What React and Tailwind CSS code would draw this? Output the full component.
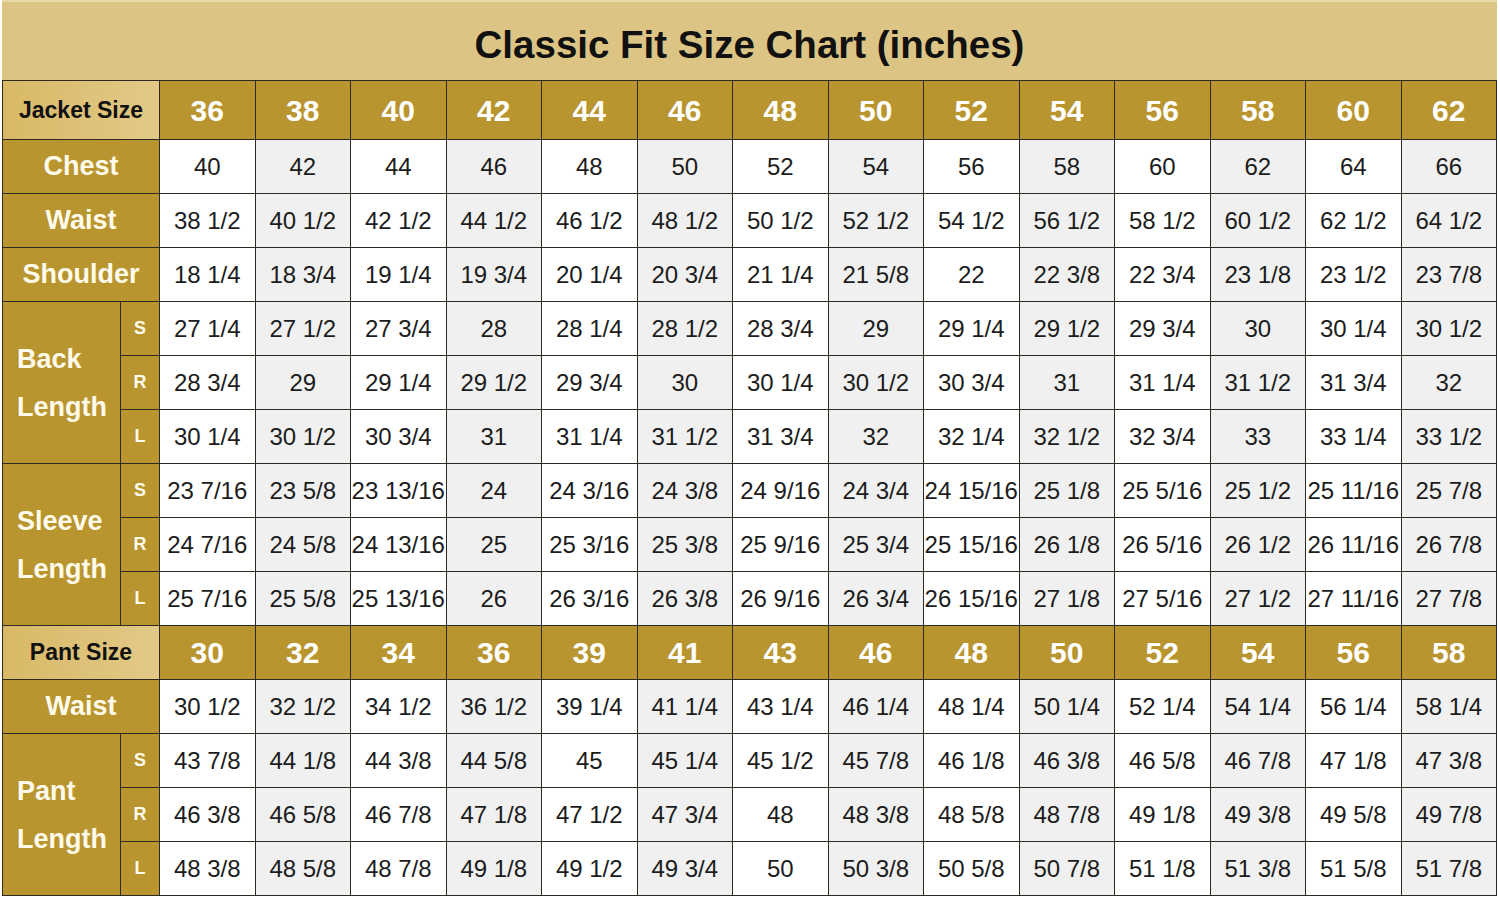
import React from 'react';

// Classic fit size chart (jacket + pant)
const jacketSizes = ['36', '38', '40', '42', '44', '46', '48', '50', '52', '54', '56', '58', '60', '62'];
const pantSizes = ['30', '32', '34', '36', '39', '41', '43', '46', '48', '50', '52', '54', '56', '58'];

const chest = ['40', '42', '44', '46', '48', '50', '52', '54', '56', '58', '60', '62', '64', '66'];
const jacketWaist = ['38 1/2', '40 1/2', '42 1/2', '44 1/2', '46 1/2', '48 1/2', '50 1/2', '52 1/2', '54 1/2', '56 1/2', '58 1/2', '60 1/2', '62 1/2', '64 1/2'];
const shoulder = ['18 1/4', '18 3/4', '19 1/4', '19 3/4', '20 1/4', '20 3/4', '21 1/4', '21 5/8', '22', '22 3/8', '22 3/4', '23 1/8', '23 1/2', '23 7/8'];

const backLength = [
  ['S', ['27 1/4', '27 1/2', '27 3/4', '28', '28 1/4', '28 1/2', '28 3/4', '29', '29 1/4', '29 1/2', '29 3/4', '30', '30 1/4', '30 1/2']],
  ['R', ['28 3/4', '29', '29 1/4', '29 1/2', '29 3/4', '30', '30 1/4', '30 1/2', '30 3/4', '31', '31 1/4', '31 1/2', '31 3/4', '32']],
  ['L', ['30 1/4', '30 1/2', '30 3/4', '31', '31 1/4', '31 1/2', '31 3/4', '32', '32 1/4', '32 1/2', '32 3/4', '33', '33 1/4', '33 1/2']],
];

const sleeveLength = [
  ['S', ['23 7/16', '23 5/8', '23 13/16', '24', '24 3/16', '24 3/8', '24 9/16', '24 3/4', '24 15/16', '25 1/8', '25 5/16', '25 1/2', '25 11/16', '25 7/8']],
  ['R', ['24 7/16', '24 5/8', '24 13/16', '25', '25 3/16', '25 3/8', '25 9/16', '25 3/4', '25 15/16', '26 1/8', '26 5/16', '26 1/2', '26 11/16', '26 7/8']],
  ['L', ['25 7/16', '25 5/8', '25 13/16', '26', '26 3/16', '26 3/8', '26 9/16', '26 3/4', '26 15/16', '27 1/8', '27 5/16', '27 1/2', '27 11/16', '27 7/8']],
];

const pantWaist = ['30 1/2', '32 1/2', '34 1/2', '36 1/2', '39 1/4', '41 1/4', '43 1/4', '46 1/4', '48 1/4', '50 1/4', '52 1/4', '54 1/4', '56 1/4', '58 1/4'];

const pantLength = [
  ['S', ['43 7/8', '44 1/8', '44 3/8', '44 5/8', '45', '45 1/4', '45 1/2', '45 7/8', '46 1/8', '46 3/8', '46 5/8', '46 7/8', '47 1/8', '47 3/8']],
  ['R', ['46 3/8', '46 5/8', '46 7/8', '47 1/8', '47 1/2', '47 3/4', '48', '48 3/8', '48 5/8', '48 7/8', '49 1/8', '49 3/8', '49 5/8', '49 7/8']],
  ['L', ['48 3/8', '48 5/8', '48 7/8', '49 1/8', '49 1/2', '49 3/4', '50', '50 3/8', '50 5/8', '50 7/8', '51 1/8', '51 3/8', '51 5/8', '51 7/8']],
];

const DataCells = ({ values }) =>
  values.map((v, i) => (
    <div
      key={i}
      className={`flex items-center justify-center whitespace-nowrap text-[24px] text-[#1c1c1c] ${i % 2 ? 'bg-[#f0f0f0]' : 'bg-white'}`}
    >
      {v}
    </div>
  ));

const HeaderRow = ({ label, sizes }) => (
  <>
    <div className="col-span-2 flex items-center justify-center bg-gradient-to-r from-[#d9b966] to-[#e2c988] text-[23px] font-bold text-[#111]">
      {label}
    </div>
    {sizes.map((s) => (
      <div key={s} className="flex items-center justify-center bg-[#b99530] text-[30px] font-bold text-white">
        {s}
      </div>
    ))}
  </>
);

const LabelRow = ({ label, values }) => (
  <>
    <div className="col-span-2 flex items-center justify-center bg-[#b99530] text-[27px] font-bold text-[#fffbea]">
      {label}
    </div>
    <DataCells values={values} />
  </>
);

const GroupRows = ({ lines, rows }) => (
  <>
    {rows.map(([fit, values], idx) => (
      <React.Fragment key={fit}>
        {idx === 0 && (
          <div className="row-span-3 flex flex-col justify-center bg-[#b99530] pl-[14px] text-[27px] font-bold leading-[48px] text-[#fffbea]">
            {lines.map((l) => (
              <span key={l}>{l}</span>
            ))}
          </div>
        )}
        <div className="col-start-2 flex items-center justify-center bg-[#b99530] text-[18px] font-bold text-[#fffbea]">
          {fit}
        </div>
        <DataCells values={values} />
      </React.Fragment>
    ))}
  </>
);

const App = () => {
  return (
    <div className="h-[898px] w-[1500px] bg-white pl-[2px] font-['Liberation_Sans',Arial,sans-serif]">
      <div className="flex h-[80px] w-[1495px] items-center justify-center border-t-2 border-[#e9d9a8] bg-[#dcc584] pt-[8px]">
        <h1 className="text-[38.5px] font-bold text-[#111]">Classic Fit Size Chart (inches)</h1>
      </div>

      <div className="grid w-[1495px] grid-cols-[117px_38px_repeat(14,minmax(0,1fr))] grid-rows-[58px_repeat(14,53px)] gap-px bg-[#2e2a22] p-px">
        <HeaderRow label="Jacket Size" sizes={jacketSizes} />
        <LabelRow label="Chest" values={chest} />
        <LabelRow label="Waist" values={jacketWaist} />
        <LabelRow label="Shoulder" values={shoulder} />
        <GroupRows lines={['Back', 'Length']} rows={backLength} />
        <GroupRows lines={['Sleeve', 'Length']} rows={sleeveLength} />
        <HeaderRow label="Pant Size" sizes={pantSizes} />
        <LabelRow label="Waist" values={pantWaist} />
        <GroupRows lines={['Pant', 'Length']} rows={pantLength} />
      </div>
    </div>
  );
};

export default App;
